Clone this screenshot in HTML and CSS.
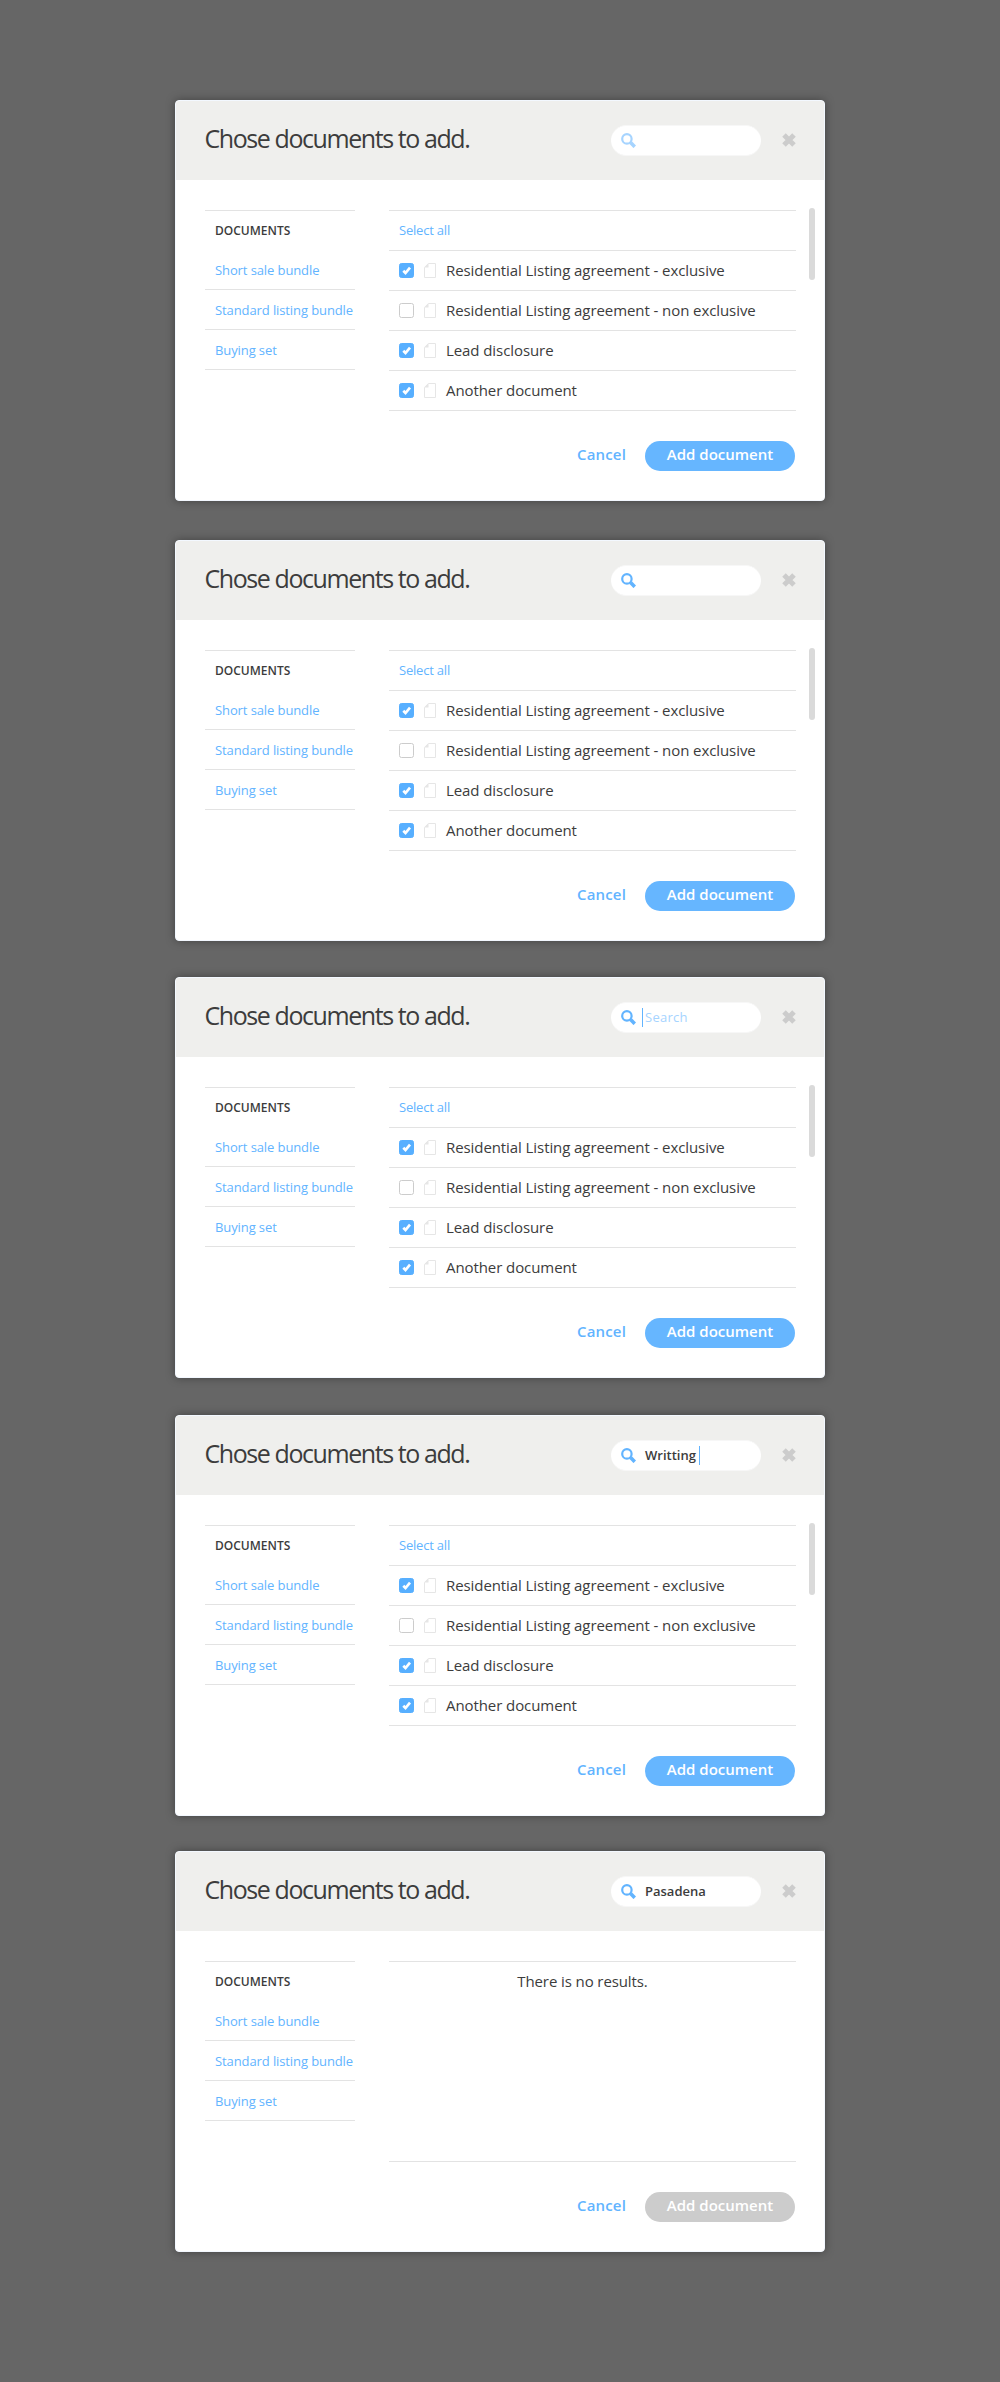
FILE: index.html
```html
<!DOCTYPE html>
<html lang="en">
<head>
<meta charset="utf-8">
<title>Chose documents to add</title>
<link rel="stylesheet" href="styles.css">
</head>
<body>
<svg class="sprite" aria-hidden="true">
  <symbol id="i-search" viewBox="0 0 15 15">
    <circle cx="5.9" cy="5.9" r="4.7" fill="none" stroke="currentColor" stroke-width="2.2"/>
    <path d="M9 9l1.2 1.2" stroke="currentColor" stroke-width="2.4" fill="none"/>
    <path d="M9.8 9.8l4 4" stroke="currentColor" stroke-width="3.6" fill="none"/>
  </symbol>
  <symbol id="i-close" viewBox="0 0 14 14">
    <path d="M2 2l10 10M12 2L2 12" stroke="currentColor" stroke-width="5" fill="none"/>
  </symbol>
  <symbol id="i-check" viewBox="0 0 15 15">
    <path d="M4.300 7.800l2.200 2.200 4.500-5.300" stroke="currentColor" stroke-width="2.700" fill="none"/>
  </symbol>
  <symbol id="i-file" viewBox="0 0 12 15">
    <path d="M4.5.5h7v14H.5v-10z" stroke="currentColor" fill="none"/>
    <path d="M4.5 0v4.5H0z" fill="currentColor"/>
  </symbol>
</svg>
<main class="stack">

  <section class="dialog">
    <header class="head">
      <h2 class="title">Chose documents to add.</h2>
      <div class="search search-idle"><svg class="icon-search"><use href="#i-search"/></svg></div>
      <svg class="close"><use href="#i-close"/></svg>
    </header>
    <div class="content">
      <nav class="side">
        <h3 class="side-title">DOCUMENTS</h3>
        <a class="side-link">Short sale bundle</a>
        <a class="side-link">Standard listing bundle</a>
        <a class="side-link">Buying set</a>
      </nav>
      <div class="list">
        <div class="row row-all">Select all</div>
        <div class="row"><span class="box checked"><svg><use href="#i-check"/></svg></span><svg class="file"><use href="#i-file"/></svg><span class="name">Residential Listing agreement - exclusive</span></div>
        <div class="row"><span class="box"></span><svg class="file"><use href="#i-file"/></svg><span class="name">Residential Listing agreement - non exclusive</span></div>
        <div class="row"><span class="box checked"><svg><use href="#i-check"/></svg></span><svg class="file"><use href="#i-file"/></svg><span class="name">Lead disclosure</span></div>
        <div class="row"><span class="box checked"><svg><use href="#i-check"/></svg></span><svg class="file"><use href="#i-file"/></svg><span class="name">Another document</span></div>
      </div>
      <div class="scrollbar"></div>
    </div>
    <footer class="actions"><a class="cancel">Cancel</a><span class="add">Add document</span></footer>
  </section>

  <section class="dialog dialog-2">
    <header class="head">
      <h2 class="title">Chose documents to add.</h2>
      <div class="search"><svg class="icon-search"><use href="#i-search"/></svg></div>
      <svg class="close"><use href="#i-close"/></svg>
    </header>
    <div class="content">
      <nav class="side">
        <h3 class="side-title">DOCUMENTS</h3>
        <a class="side-link">Short sale bundle</a>
        <a class="side-link">Standard listing bundle</a>
        <a class="side-link">Buying set</a>
      </nav>
      <div class="list">
        <div class="row row-all">Select all</div>
        <div class="row"><span class="box checked"><svg><use href="#i-check"/></svg></span><svg class="file"><use href="#i-file"/></svg><span class="name">Residential Listing agreement - exclusive</span></div>
        <div class="row"><span class="box"></span><svg class="file"><use href="#i-file"/></svg><span class="name">Residential Listing agreement - non exclusive</span></div>
        <div class="row"><span class="box checked"><svg><use href="#i-check"/></svg></span><svg class="file"><use href="#i-file"/></svg><span class="name">Lead disclosure</span></div>
        <div class="row"><span class="box checked"><svg><use href="#i-check"/></svg></span><svg class="file"><use href="#i-file"/></svg><span class="name">Another document</span></div>
      </div>
      <div class="scrollbar"></div>
    </div>
    <footer class="actions"><a class="cancel">Cancel</a><span class="add">Add document</span></footer>
  </section>

  <section class="dialog dialog-3">
    <header class="head">
      <h2 class="title">Chose documents to add.</h2>
      <div class="search"><svg class="icon-search"><use href="#i-search"/></svg><span class="caret caret-start"></span><span class="placeholder">Search</span></div>
      <svg class="close"><use href="#i-close"/></svg>
    </header>
    <div class="content">
      <nav class="side">
        <h3 class="side-title">DOCUMENTS</h3>
        <a class="side-link">Short sale bundle</a>
        <a class="side-link">Standard listing bundle</a>
        <a class="side-link">Buying set</a>
      </nav>
      <div class="list">
        <div class="row row-all">Select all</div>
        <div class="row"><span class="box checked"><svg><use href="#i-check"/></svg></span><svg class="file"><use href="#i-file"/></svg><span class="name">Residential Listing agreement - exclusive</span></div>
        <div class="row"><span class="box"></span><svg class="file"><use href="#i-file"/></svg><span class="name">Residential Listing agreement - non exclusive</span></div>
        <div class="row"><span class="box checked"><svg><use href="#i-check"/></svg></span><svg class="file"><use href="#i-file"/></svg><span class="name">Lead disclosure</span></div>
        <div class="row"><span class="box checked"><svg><use href="#i-check"/></svg></span><svg class="file"><use href="#i-file"/></svg><span class="name">Another document</span></div>
      </div>
      <div class="scrollbar"></div>
    </div>
    <footer class="actions"><a class="cancel">Cancel</a><span class="add">Add document</span></footer>
  </section>

  <section class="dialog dialog-4">
    <header class="head">
      <h2 class="title">Chose documents to add.</h2>
      <div class="search"><svg class="icon-search"><use href="#i-search"/></svg><span class="query">Writting</span><span class="caret caret-end"></span></div>
      <svg class="close"><use href="#i-close"/></svg>
    </header>
    <div class="content">
      <nav class="side">
        <h3 class="side-title">DOCUMENTS</h3>
        <a class="side-link">Short sale bundle</a>
        <a class="side-link">Standard listing bundle</a>
        <a class="side-link">Buying set</a>
      </nav>
      <div class="list">
        <div class="row row-all">Select all</div>
        <div class="row"><span class="box checked"><svg><use href="#i-check"/></svg></span><svg class="file"><use href="#i-file"/></svg><span class="name">Residential Listing agreement - exclusive</span></div>
        <div class="row"><span class="box"></span><svg class="file"><use href="#i-file"/></svg><span class="name">Residential Listing agreement - non exclusive</span></div>
        <div class="row"><span class="box checked"><svg><use href="#i-check"/></svg></span><svg class="file"><use href="#i-file"/></svg><span class="name">Lead disclosure</span></div>
        <div class="row"><span class="box checked"><svg><use href="#i-check"/></svg></span><svg class="file"><use href="#i-file"/></svg><span class="name">Another document</span></div>
      </div>
      <div class="scrollbar"></div>
    </div>
    <footer class="actions"><a class="cancel">Cancel</a><span class="add">Add document</span></footer>
  </section>

  <section class="dialog dialog-5">
    <header class="head">
      <h2 class="title">Chose documents to add.</h2>
      <div class="search"><svg class="icon-search"><use href="#i-search"/></svg><span class="query">Pasadena</span></div>
      <svg class="close"><use href="#i-close"/></svg>
    </header>
    <div class="content">
      <nav class="side">
        <h3 class="side-title">DOCUMENTS</h3>
        <a class="side-link">Short sale bundle</a>
        <a class="side-link">Standard listing bundle</a>
        <a class="side-link">Buying set</a>
      </nav>
      <div class="list list-empty"><p class="empty">There is no results.</p></div>
    </div>
    <footer class="actions"><a class="cancel">Cancel</a><span class="add add-disabled">Add document</span></footer>
  </section>

</main>
</body>
</html>
```
FILE: styles.css
```css
* { box-sizing: border-box; }
body {
  margin: 0;
  background: #666;
  color: #3c3c3c;
  font-family: "Open Sans", sans-serif;
}
svg { display: block; flex: none; }
.sprite { position: absolute; width: 0; height: 0; }
.stack {
  display: flex;
  flex-direction: column;
  align-items: center;
  height: 2382px;
  padding-top: 100px;
}
.dialog {
  flex: none;
  width: 650px;
  height: 401px;
  border: 1px solid #f3f8ff;
  border-radius: 4px;
  background: #fff;
  box-shadow: 0 0 10px rgba(0, 0, 0, .35);
}
.dialog-2 { margin-top: 39px; }
.dialog-3 { margin-top: 36px; }
.dialog-4 { margin-top: 37px; }
.dialog-5 { margin-top: 35px; }

.head {
  display: flex;
  align-items: flex-start;
  height: 79px;
  padding: 24px 28px 0 29px;
  border-radius: 3px 3px 0 0;
  background: #efefed;
}
.title {
  flex: 1;
  margin: -5px 0 0 -.5px;
  font-size: 25px;
  line-height: 36px;
  font-weight: 400;
  letter-spacing: -1.42px;
  white-space: nowrap;
}
.search {
  display: flex;
  align-items: center;
  width: 150px;
  height: 31px;
  padding-left: 10px;
  border: 1px solid #f7f7f7;
  border-width: 1px 0;
  border-radius: 16px;
  background: #fff;
  color: #62b4ff;
  font-size: 13px;
  line-height: 18px;
}
.search-idle { color: #a6d4ff; }
.icon-search { width: 15px; height: 15px; }
.placeholder { margin: -1px 0 0 2px; color: #a6d4ff; letter-spacing: .26px; }
.query { margin: -1px 0 0 9px; color: #3c3c3c; font-weight: 600; }
.caret { width: 1px; height: 19px; background: #62b4ff; }
.caret-start { margin-left: 6px; }
.caret-end { margin-left: 3px; }
.close { width: 14px; height: 14px; margin: 8px 0 0 21px; color: #ccc; }

.content { display: flex; height: 261px; padding: 30px 9px 0 29px; }
.side { width: 150px; margin-right: 34px; border-top: 1px solid #e3e3e3; }
.side-title { margin: 0; padding-left: 10px; font-size: 12px; line-height: 39px; font-weight: 600; }
.side-link {
  display: block;
  height: 40px;
  padding-left: 10px;
  border-bottom: 1px solid #e3e3e3;
  color: #62b4ff;
  font-size: 13px;
  letter-spacing: -.1px;
  line-height: 40px;
  white-space: nowrap;
}
.list { width: 407px; height: 201px; border-top: 1px solid #e3e3e3; }
.row {
  display: flex;
  align-items: center;
  height: 40px;
  padding-left: 10px;
  border-bottom: 1px solid #e3e3e3;
  font-size: 15px;
  letter-spacing: -.08px;
  white-space: nowrap;
}
.row-all {
  padding-bottom: 1px;
  color: #62b4ff;
  font-size: 13px;
  line-height: 18px;
  letter-spacing: -.2px;
}
.name { margin-top: -1px; line-height: 20px; }
.box { width: 15px; height: 15px; border: 1px solid #ccc; border-radius: 2.5px; }
.box svg { width: 15px; height: 15px; margin: -1px; }
.checked { border-color: #57afff; background: #57afff; color: #fff; }
.file { width: 12px; height: 15px; margin: 0 10px; color: #e6e6e6; }
.list-empty { border-bottom: 1px solid #e3e3e3; }
.empty {
  margin: 0;
  padding-right: 20px;
  font-size: 15px;
  line-height: 38px;
  letter-spacing: -.1px;
  text-align: center;
}
.scrollbar { width: 6px; height: 72px; margin: -2px 0 0 13px; border-radius: 3px; background: #dadada; }

.actions {
  display: flex;
  justify-content: flex-end;
  padding-right: 29px;
  font-size: 15px;
  line-height: 26px;
  font-weight: 600;
}
.cancel { margin-right: 19px; color: #62b4ff; letter-spacing: .15px; }
.add {
  width: 150px;
  height: 30px;
  border-radius: 15px;
  background: #66b6ff;
  color: #fff;
  text-align: center;
}
.add-disabled { background: #ccc; }
```
